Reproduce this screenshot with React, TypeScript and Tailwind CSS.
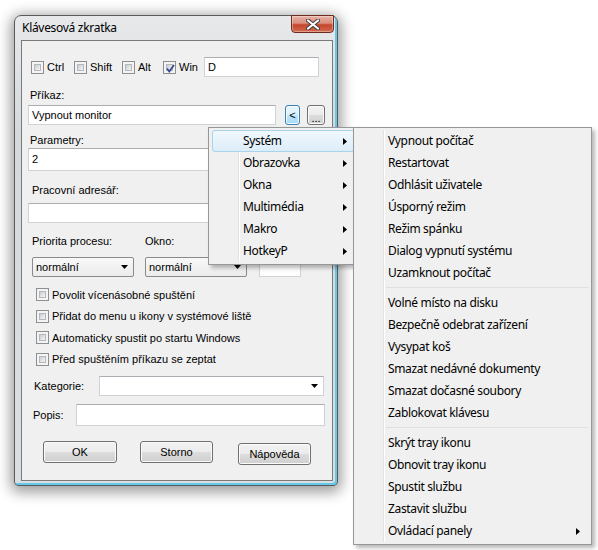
import React from 'react';

const dlg = "font-['Liberation_Sans',Arial,sans-serif] text-[11px] font-normal text-black";
const ui = "font-['Noto_Sans','Open_Sans',sans-serif] text-[12px] tracking-[-0.35px] text-black";

function Check({ checked }: { checked?: boolean }) {
  return (
    <span className="relative flex h-[13px] w-[13px] shrink-0 border border-[#8e8f8f] bg-[#f4f4f4] p-[2px]">
      <span className="block h-full w-full border border-[#b4b8be] bg-[linear-gradient(135deg,#c9cdd3,#f5f5f5)]" />
      {checked && (
        <svg className="absolute left-[1px] top-[1px]" width="11" height="11" viewBox="0 0 11 11">
          <path d="M2 5.5 L4.3 8.5 L9 2" fill="none" stroke="#37498f" strokeWidth="1.8" />
        </svg>
      )}
    </span>
  );
}

const Down = () => (
  <svg width="7" height="4" viewBox="0 0 7 4">
    <path d="M0 0h7L3.5 4z" fill="#000" />
  </svg>
);

const Right = () => (
  <svg width="4" height="7" viewBox="0 0 4 7">
    <path d="M0 0L4 3.5L0 7z" fill="#000" />
  </svg>
);

const field = 'flex items-center bg-white border border-[#cfd3d8] border-t-[#abadb3] px-[3px]';
const button =
  'flex items-center justify-center rounded-[3px] border border-[#707070] bg-[linear-gradient(#f2f2f2_0%,#ebebeb_50%,#dddddd_50%,#cfcfcf_100%)] shadow-[inset_0_0_0_1px_#fbfbfb]';
const select =
  'flex items-center justify-between rounded-[2px] border border-[#8a8a8a] bg-[linear-gradient(#f8f8f8,#ececec)] pl-[3px] pr-[5px]';

function CheckRow({ label, checked }: { label: string; checked?: boolean }) {
  return (
    <div className="flex h-[21.5px] items-center pl-[14px]">
      <Check checked={checked} />
      <span className="ml-[3px]">{label}</span>
    </div>
  );
}

function Dialog() {
  return (
    <div className="absolute left-[14px] top-[15px] h-[471px] w-[324px] rounded-t-[7px] rounded-b-[4px] border border-[#5a5a5a] bg-[linear-gradient(180deg,#e7e9eb,#d6d9dc_25%,#dcdfe2)] shadow-[inset_-2px_-2px_0_#62c9ea,0_3px_14px_3px_rgba(0,0,0,0.4)]">
      <div className="flex h-[24px] items-center pl-[7px] font-['Noto_Sans',sans-serif] text-[12px] tracking-[-0.3px] text-black">
        Klávesová zkratka
      </div>
      <div className="absolute right-[3px] top-[-1px] flex h-[18px] w-[43px] items-center justify-center rounded-b-[4px] border border-[#6d2a20] bg-[linear-gradient(#e8b3a6_0%,#d98e7c_45%,#c4452f_55%,#d46a4e_100%)] shadow-[inset_0_0_0_1px_rgba(255,255,255,0.35)]">
        <svg width="14" height="11" viewBox="0 0 14 11">
          <path d="M2 1.5L12 9.5M12 1.5L2 9.5" stroke="#3c3c3c" strokeWidth="4" strokeLinecap="round" />
          <path d="M2 1.5L12 9.5M12 1.5L2 9.5" stroke="#ffffff" strokeWidth="2.2" strokeLinecap="round" />
        </svg>
      </div>

      <div className={`ml-[6px] flex h-[441px] w-[312px] flex-col border border-[#7a7a7a] bg-[#f0f0f0] ${dlg}`}>
        <div className="mt-[16px] flex h-[20px] items-center pl-[9px]">
          <div className="flex w-[43px] items-center">
            <Check />
            <span className="ml-[3px]">Ctrl</span>
          </div>
          <div className="flex w-[48px] items-center">
            <Check />
            <span className="ml-[3px]">Shift</span>
          </div>
          <div className="flex w-[41px] items-center">
            <Check />
            <span className="ml-[3px]">Alt</span>
          </div>
          <div className="flex w-[41px] items-center">
            <Check checked />
            <span className="ml-[3px]">Win</span>
          </div>
          <div className={`${field} h-[20px] w-[115px]`}>D</div>
        </div>

        <div className="mt-[12px] h-[13px] pl-[8px] leading-[13px]">Příkaz:</div>
        <div className="mt-[3px] flex h-[20px] items-center pl-[6px]">
          <div className={`${field} h-[20px] w-[248px]`}>Vypnout monitor</div>
          <div className="ml-[9px] flex h-[20px] w-[15px] items-center justify-center rounded-[3px] border border-[#3c7fb1] bg-[linear-gradient(#eaf6fd_0%,#d9f0fc_50%,#bee6fd_50%,#a7d9f5_100%)] shadow-[inset_0_0_0_1px_#f4fbff]">
            &lt;
          </div>
          <div className={`${button} ml-[7px] h-[20px] w-[18px] items-end pb-[1px] leading-[10px]`}>...</div>
        </div>

        <div className="mt-[9px] h-[13px] pl-[8px] leading-[13px]">Parametry:</div>
        <div className={`${field} ml-[6px] mt-[1px] h-[23px] w-[297px]`}>2</div>

        <div className="mt-[13px] h-[13px] pl-[10px] leading-[13px]">Pracovní adresář:</div>
        <div className={`${field} ml-[6px] mt-[6px] h-[20px] w-[297px]`} />

        <div className="mt-[12px] flex h-[13px] pl-[10px] leading-[13px]">
          <span className="w-[113px]">Priorita procesu:</span>
          <span>Okno:</span>
        </div>
        <div className="mt-[9px] flex h-[20px] items-center">
          <div className={`${select} ml-[10px] h-[20px] w-[102px]`}>
            <span>normální</span>
            <Down />
          </div>
          <div className={`${select} ml-[11px] h-[20px] w-[102px]`}>
            <span>normální</span>
            <Down />
          </div>
          <div className={`${field} ml-[12px] h-[20px] w-[42px]`} />
        </div>

        <div className="mt-[7px] flex flex-col">
          <CheckRow label="Povolit vícenásobné spuštění" />
          <CheckRow label="Přidat do menu u ikony v systémové liště" />
          <CheckRow label="Automaticky spustit po startu Windows" />
          <CheckRow label="Před spuštěním příkazu se zeptat" />
        </div>

        <div className="mt-[6px] flex h-[20px] items-center">
          <span className="w-[77px] pl-[12px]">Kategorie:</span>
          <div className={`${field} h-[20px] w-[225px] justify-end pr-[5px]`}>
            <Down />
          </div>
        </div>

        <div className="mt-[8px] flex h-[22px] items-center">
          <span className="w-[54px] pl-[11px]">Popis:</span>
          <div className={`${field} h-[22px] w-[249px]`} />
        </div>

        <div className="mt-[15px] flex h-[24px] items-start">
          <div className={`${button} ml-[21px] h-[22px] w-[74px]`}>OK</div>
          <div className={`${button} ml-[23px] h-[22px] w-[73px]`}>Storno</div>
          <div className={`${button} ml-[25px] mt-[2px] h-[22px] w-[73px]`}>Nápověda</div>
        </div>
      </div>
    </div>
  );
}

function Item({ label, sub, active }: { label: string; sub?: boolean; active?: boolean }) {
  return (
    <div
      className={`mx-[1px] flex h-[22px] items-center rounded-[3px] border pl-[30px] pr-[7px] ${
        active
          ? 'border-[#a8d3eb] bg-[linear-gradient(#f1f8fd,#dcedf9)]'
          : 'border-transparent'
      }`}
    >
      <span className="flex-1 whitespace-nowrap">{label}</span>
      {sub && <Right />}
    </div>
  );
}

const Sep = () => (
  <div className="flex h-[8px] items-center pl-[30px]">
    <div className="h-[2px] w-full border-t border-[#e0e0e0] border-b-white" />
  </div>
);

const menuBox =
  'absolute border border-[#979797] bg-[#f0f0f0] p-[2px] shadow-[3px_3px_4px_rgba(0,0,0,0.28)]';

function Gutter() {
  return <div className="absolute bottom-[2px] left-[29px] top-[2px] w-[2px] border-l border-[#e2e3e3] bg-white" />;
}

const group1 = [
  'Vypnout počítač',
  'Restartovat',
  'Odhlásit uživatele',
  'Úsporný režim',
  'Režim spánku',
  'Dialog vypnutí systému',
  'Uzamknout počítač',
];
const group2 = [
  'Volné místo na disku',
  'Bezpečně odebrat zařízení',
  'Vysypat koš',
  'Smazat nedávné dokumenty',
  'Smazat dočasné soubory',
  'Zablokovat klávesu',
];
const group3 = ['Skrýt tray ikonu', 'Obnovit tray ikonu', 'Spustit službu', 'Zastavit službu'];

export default function App() {
  return (
    <div className="relative h-[550px] w-[598px] overflow-hidden bg-white">
      <Dialog />

      <div className={`${menuBox} ${ui} left-[208px] top-[127px] z-10 h-[138px] w-[151px]`}>
        <Gutter />
        <div className="relative">
          <Item label="Systém" sub active />
          <Item label="Obrazovka" sub />
          <Item label="Okna" sub />
          <Item label="Multimédia" sub />
          <Item label="Makro" sub />
          <Item label="HotkeyP" sub />
        </div>
      </div>

      <div className={`${menuBox} ${ui} left-[353px] top-[127px] z-20 h-[418px] w-[239px]`}>
        <Gutter />
        <div className="relative">
          {group1.map((t) => (
            <Item key={t} label={t} />
          ))}
          <Sep />
          {group2.map((t) => (
            <Item key={t} label={t} />
          ))}
          <Sep />
          {group3.map((t) => (
            <Item key={t} label={t} />
          ))}
          <Item label="Ovládací panely" sub />
        </div>
      </div>
    </div>
  );
}
